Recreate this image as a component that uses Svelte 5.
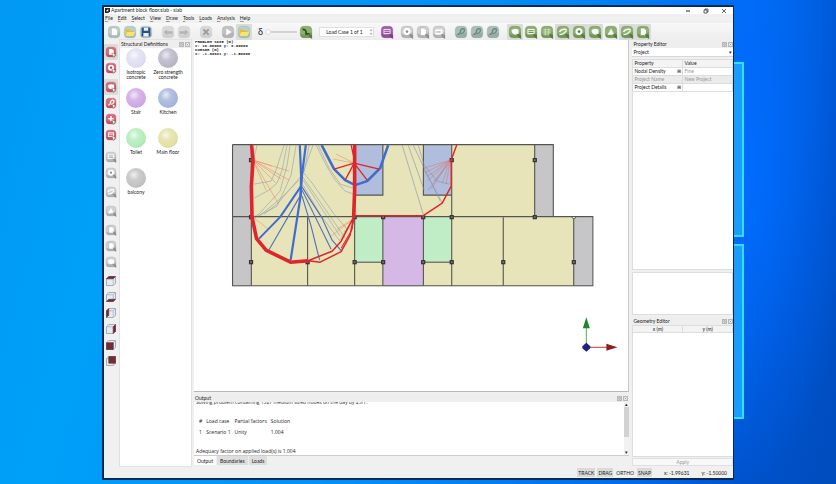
<script>
    let menus = ['File', 'Edit', 'Select', 'View', 'Draw', 'Tools', 'Loads', 'Analysis', 'Help'];

    let fileTools = [
        [
            { name: 'New', tone: 'teal', glyph: 'page' },
            { name: 'Open', tone: 'teal', glyph: 'folder' },
            { name: 'Save', tone: 'teal', glyph: 'disk' },
        ],
        [
            { name: 'Undo', tone: 'dim', glyph: 'undo' },
            { name: 'Redo', tone: 'dim', glyph: 'redo' },
        ],
        [{ name: 'Delete', tone: 'dim', glyph: 'cross' }],
        [
            { name: 'Solve', tone: 'ash', glyph: 'play' },
            { name: 'Unlock', tone: 'teal', glyph: 'folder', on: true },
        ],
    ];

    let viewTools = [
        [
            { name: 'Zoom in', tone: 'grey', glyph: 'dot' },
            { name: 'Zoom out', tone: 'grey', glyph: 'page' },
            { name: 'Zoom all', tone: 'grey', glyph: 'dash' },
        ],
        [
            { name: 'Front', tone: 'slate', glyph: 'wave' },
            { name: 'Side', tone: 'slate', glyph: 'wave' },
            { name: 'Top', tone: 'slate', glyph: 'wave' },
        ],
        [
            { name: 'Solids', tone: 'green', glyph: 'blob', on: true },
            { name: 'Boundaries', tone: 'green', glyph: 'list' },
            { name: 'Grid', tone: 'green', glyph: 'grid' },
            { name: 'Nodes', tone: 'green', glyph: 'slash', on: true },
            { name: 'Vertices', tone: 'green', glyph: 'dot', on: true },
            { name: 'Zones', tone: 'green', glyph: 'blob', on: true },
            { name: 'Supports', tone: 'green', glyph: 'tri' },
            { name: 'Rotation', tone: 'green', glyph: 'slash', on: true },
            { name: 'Slip lines', tone: 'green', glyph: 'page', on: true },
        ],
    ];

    let sideTools = [
        [
            { name: 'Select', tone: 'red', glyph: 'page', on: true },
            { name: 'Select box', tone: 'red', glyph: 'dot' },
        ],
        [
            { name: 'Pointer', tone: 'red', glyph: 'blob', on: true },
            { name: 'Move', tone: 'red', glyph: 'wave' },
            { name: 'Insert vertex', tone: 'red', glyph: 'plus' },
            { name: 'Rotate', tone: 'red', glyph: 'list' },
        ],
        [
            { name: 'Rectangle', tone: 'grey', glyph: 'list' },
            { name: 'Polygon', tone: 'grey', glyph: 'dot' },
        ],
        [{ name: 'Line', tone: 'grey', glyph: 'slash' }],
        [{ name: 'Pan', tone: 'grey', glyph: 'tri' }],
        [
            { name: 'Zoom', tone: 'grey', glyph: 'page' },
            { name: 'Zoom window', tone: 'grey', glyph: 'page' },
            { name: 'Zoom extents', tone: 'grey', glyph: 'blob' },
        ],
        [
            { name: 'View top', face: 'top' },
            { name: 'View bottom', face: 'bottom' },
            { name: 'View left', face: 'left' },
            { name: 'View right', face: 'right' },
            { name: 'View front', face: 'front' },
            { name: 'View back', face: 'back' },
        ],
    ];

    let tones = {
        teal: ['#b9cfca', '#8fa8a4', '#ffffff'],
        dim: ['#d9d9d9', '#c6c6c6', '#b4b4b4'],
        ash: ['#c2c2c2', '#a2a2a2', '#ffffff'],
        grey: ['#d2d2d2', '#8f8f8f', '#ffffff'],
        slate: ['#a9bfb9', '#809892', '#6a8881'],
        purple: ['#a55cae', '#7c3f86', '#ecd9ef'],
        green: ['#8fb071', '#557d3b', '#f8fcf5'],
        red: ['#d76a78', '#a93c4b', '#ffffff'],
    };

    let faces = {
        top: 'M2 5L5 2H14L11 5Z',
        bottom: 'M2 14L5 11H14L11 14Z',
        left: 'M2 5L5 2V11L2 14Z',
        right: 'M11 5L14 2V11L11 14Z',
        front: 'M2 5H11V14H2Z',
        back: 'M5 2H14V11H5Z',
    };

    let materials = [
        { name: 'Isotropic concrete', color: '#e0def2' },
        { name: 'Zero strength concrete', color: '#bbb8c9' },
        { name: 'Stair', color: '#d0a9e6' },
        { name: 'Kitchen', color: '#a6b7dc' },
        { name: 'Toilet', color: '#b3edbb' },
        { name: 'Main floor', color: '#e3e1a6' },
        { name: 'balcony', color: '#c3c3c3' },
    ];

    // x, y, width, height, fill
    let zones = [
        [233, 145, 18, 141, '#c6c6c8'],
        [251, 145, 283, 72, '#e6e4b8'],
        [534, 145, 19, 72, '#c6c6c8'],
        [251, 217, 322, 69, '#e6e4b8'],
        [573, 217, 19, 69, '#c6c6c8'],
        [354, 145, 29, 50, '#b0bddc'],
        [423, 145, 28, 50, '#b0bddc'],
        [354, 217, 29, 45, '#c0edc5'],
        [423, 217, 28, 45, '#c0edc5'],
        [383, 217, 40, 69, '#d5b8e6'],
    ];

    let walls = [
        'M232.5 144.5H553V216.5', 'M232.5 144.5V285.5H592.5V216.5H232.5',
        'M251.3 144.5V285.5', 'M307.5 217V285.5', 'M354.5 144.5V285.5',
        'M382.7 145V195H354.5', 'M451.5 195H423.2V145', 'M451.5 145V285.5',
        'M382.7 217V285.5', 'M423.2 217V285.5', 'M354.5 262H382.7', 'M423.2 262H451.5',
        'M503 217V285.5', 'M534.4 144.5V216.5', 'M573.4 217V285.5',
    ];

    let columns = [
        [251, 160], [251, 217], [251, 262], [307.5, 262], [354.5, 217], [354.5, 262],
        [383, 217], [383, 262], [423, 217], [423, 262], [451.5, 160], [451.5, 217],
        [451.5, 262], [503, 262], [534.5, 160], [534.5, 217], [573.5, 262],
    ];

    let faintBlue = [
        'M284 145L276 170L271 181L254 184', 'M287 145L282 170L277 183L269 190L254 198',
        'M290 145L287 165L280 191L266 206L259 214L253 217', 'M299 180L282 197L258 217',
        'M300 177L278 203L264 214', 'M296 145L291 175L277 206L254 218', 'M257 145L254 158',
        'M313 145L302 175', 'M309 145L304 172', 'M303 172L312 183L334 214L347 229',
        'M302 176L330 216L345 238', 'M303 180L324 212L340 236', 'M303 185L320 214L339 240',
        'M316 145L326 165L335 180L345 191L354 194', 'M318 145L329 168L340 184L353 188',
    ];

    let paleBlue = [
        'M402 145L423 214', 'M408 145L424 190', 'M413 145L426 172L440 201',
        'M418 145L424 165L437 181L449 184', 'M424 170L432 184L442 203', 'M447 165L428 190',
    ];

    let midBlue = [
        'M300.5 195L269 249.5', 'M302 190L331 249', 'M302 187L322 218L332 240L341 250.5',
        'M302 196L311 226L319.5 260',
    ];

    let faintRed = [
        'M253 160L272 166', 'M253 160L289 171', 'M253 160L289 180', 'M253 160L281 179',
        'M253 160L276 183', 'M253 160L266 190', 'M253 160L278 203',
        'M253 217L268 229', 'M353 219L337 229', 'M353 219L331 236',
        'M353 219L339 241', 'M353 219L344 232', 'M354 163L333 159', 'M354 163L336 154',
        'M450 160L424 168', 'M450 160L426 172', 'M450 160L428 176', 'M450 160L427 181',
        'M450 160L434 181', 'M450 160L442 183', 'M450 160L446 184', 'M450 160L431 189',
    ];

    let properties = [
        { label: 'Nodal Density', mark: true, value: 'Fine' },
        { label: 'Project Name', value: 'New Project', off: true },
        { label: 'Project Details', mark: true, value: '' },
    ];

    let modes = [
        { name: 'TRACK', on: true },
        { name: 'DRAG', on: true },
        { name: 'ORTHO' },
        { name: 'SNAP', on: true },
    ];

    let outputTab = $state('Output');
    let scale = $state(0);
    let project = $state('Project');
</script>

{#snippet toolButton(tool)}
    <button class="tool" class:on={tool.on} aria-label={tool.name}>
        {#if tool.face}
            <svg viewBox="0 0 16 16">
                <path d="M2 5L5 2H14V11L11 14H2Z" fill="#e6ebf2" stroke="#8d97a5" />
                <path d="M2 5H11V14M11 5L14 2" fill="none" stroke="#a5afbd" />
                <path d={faces[tool.face]} fill="#7a2a35" stroke="#54323b" stroke-width="0.8" />
            </svg>
        {:else}
            {@const [light, dark, ink] = tones[tool.tone]}
            <svg viewBox="0 0 16 16">
                <rect x="1.5" y="1.5" width="13" height="13" rx="4" fill={light} stroke={dark} stroke-opacity="0.4" />
                <path d="M2 10Q8 13 14.5 8V11.5Q14.5 14.5 11.5 14.5H5Q2 14.5 2 11.5Z" fill={dark} opacity="0.45" />
                {#if tool.glyph === 'page'}
                    <path d="M5 3.5H9.5L12 6V12H5Z" fill={ink} stroke={dark} stroke-width="0.5" />
                {:else if tool.glyph === 'folder'}
                    <path d="M3 5H7L8 6.5H12V12H3Z" fill="#e4bd35" />
                    <path d="M4.5 8H14L12 12.5H3Z" fill="#f9e46b" />
                {:else if tool.glyph === 'disk'}
                    <path d="M3 3H13V13H3Z" fill="#284f86" />
                    <path d="M5.5 3H10.5V6.5H5.5ZM5 9H11V13H5Z" fill="#e7eff9" />
                {:else if tool.glyph === 'undo'}
                    <path d="M3 8L7 5V7H13V10H7V12Z" fill={ink} />
                {:else if tool.glyph === 'redo'}
                    <path d="M13 8L9 5V7H3V10H9V12Z" fill={ink} />
                {:else if tool.glyph === 'cross'}
                    <path d="M5 5L11 11M11 5L5 11" stroke="#999" stroke-width="2" />
                {:else if tool.glyph === 'play'}
                    <path d="M6 4L12 8L6 12Z" fill={ink} />
                {:else if tool.glyph === 'list'}
                    <path d="M4 4.5H12V10.5H4Z" fill={ink} />
                    <path d="M5 6.5H11M5 8.5H11" stroke={dark} />
                {:else if tool.glyph === 'dot'}
                    <circle cx="8" cy="7.5" r="4" fill={ink} />
                    <circle cx="8" cy="7.5" r="1.5" fill={dark} />
                {:else if tool.glyph === 'dash'}
                    <path d="M4 5H12V11H4Z" fill={ink} />
                    <path d="M5 8H10" stroke={dark} />
                {:else if tool.glyph === 'wave'}
                    <path d="M4 11Q8 10 7.5 6Q10 3 12 5Q12 9 8 10" fill="none" stroke={ink} stroke-width="1.6" />
                {:else if tool.glyph === 'blob'}
                    <path d="M4 6Q7 3 12 5V10L8 11Q4 10 4 6Z" fill={ink} />
                {:else if tool.glyph === 'grid'}
                    <path d="M4 5.5H12M4 8H12M4 10.5H12M6 4V12M10 4V12" stroke={ink} stroke-width="0.6" />
                {:else if tool.glyph === 'slash'}
                    <path d="M4 8Q6 4 12 5M4 11Q9 11 12 6" fill="none" stroke={ink} stroke-width="1.6" />
                {:else if tool.glyph === 'tri'}
                    <path d="M8 4L12 11H4Z" fill={ink} />
                {:else if tool.glyph === 'plus'}
                    <path d="M8 4V11M4.5 7.5H11.5" stroke={ink} stroke-width="2" />
                {:else if tool.glyph === 'curve'}
                    <path d="M4 5Q9 5 8 10H12" fill="none" stroke="#2f4f22" stroke-width="2" />
                {/if}
                {#if tool.tone === 'red'}
                    <path d="M9 9L15 12L12.5 13L11.5 15.5Z" fill="#fff8dc" stroke="#7c6a55" stroke-width="0.6" />
                {:else if tool.tone === 'green' || tool.tone === 'purple' || tool.tone === 'grey'}
                    <path d="M10 10L15 11.5V16L12 14Z" fill={dark} />
                {/if}
            </svg>
        {/if}
    </button>
{/snippet}

{#snippet dockTitle(title)}
    <header class="dock-title">
        <h2>{title}</h2>
        <button class="dock-icon" aria-label="Float {title}">
            <svg viewBox="0 0 6 6"><path d="M.5 .5H5.5V5.5H.5ZM2 3.5V2H4V4H2" fill="none" stroke="#888" stroke-width=".7" /></svg>
        </button>
        <button class="dock-icon" aria-label="Close {title}">
            <svg viewBox="0 0 6 6"><path d="M.5 .5H5.5V5.5H.5ZM2 2L4 4M4 2L2 4" fill="none" stroke="#888" stroke-width=".7" /></svg>
        </button>
    </header>
{/snippet}

<div class="desktop">
    <div class="window">
        <div class="glow" aria-hidden="true"><i></i><i></i></div>
        <div class="frame">
            <div class="titlebar">
                <svg class="logo" viewBox="0 0 6 6"><path d="M0 0H6V4L4 6H0Z" fill="#222" /><path d="M1 4L4 1V4Z" fill="#fff" /></svg>
                <h1>Apartment block floor.slab - slab</h1>
                <button aria-label="Minimise"><svg viewBox="0 0 6 6"><path d="M1 3H5" stroke="#222" /></svg></button>
                <button aria-label="Restore"><svg viewBox="0 0 6 6"><path d="M1 2H4V5H1ZM2 2V1H5V4H4" fill="none" stroke="#222" stroke-width=".7" /></svg></button>
                <button aria-label="Close"><svg viewBox="0 0 6 6"><path d="M1 1L5 5M5 1L1 5" stroke="#222" stroke-width=".7" /></svg></button>
            </div>

            <nav class="menubar">
                {#each menus as menu}
                    <button><u>{menu[0]}</u>{menu.slice(1)}</button>
                {/each}
            </nav>

            <div class="toolbar">
                {#each fileTools as group}
                    <div class="group">
                        {#each group as tool}{@render toolButton(tool)}{/each}
                    </div>
                {/each}
                <div class="group">
                    <label class="slider">
                        <span>δ</span>
                        <input type="range" min="0" max="10" bind:value={scale} />
                    </label>
                    {@render toolButton({ name: 'Animate', tone: 'green', glyph: 'curve' })}
                </div>
                <div class="spinner">
                    <input aria-label="Load case" value="Load Case 1 of 1" />
                    <svg viewBox="0 0 4 8"><path d="M1 3L2 1.5L3 3M1 5L2 6.5L3 5" fill="none" stroke="#888" stroke-width=".7" /></svg>
                </div>
                <div class="group near">{@render toolButton({ name: 'Load cases', tone: 'purple', glyph: 'list' })}</div>
                {#each viewTools as group}
                    <div class="group">
                        {#each group as tool}{@render toolButton(tool)}{/each}
                    </div>
                {/each}
            </div>

            <div class="workspace">
                <div class="sidebar">
                    {#each sideTools as group}
                        <div class="side-group">
                            {#each group as tool}{@render toolButton(tool)}{/each}
                        </div>
                    {/each}
                </div>

                <section class="definitions">
                    {@render dockTitle('Structural Definitions')}
                    <div class="materials">
                        {#each materials as material}
                            <button class="material">
                                <span class="ball" style="background-color: {material.color}"></span>
                                {material.name}
                            </button>
                        {/each}
                    </div>
                </section>

                <main>
                    <div class="canvas">
                        <pre class="readout">PROBLEM SIZE (m)
x: 19.00000 y: 9.00000
CURSOR (m)
x: -1.99631 y: -1.50000</pre>
                        <svg class="plan" viewBox="194 40 434 351">
                            {#each zones as [x, y, width, height, fill]}
                                <rect {x} {y} {width} {height} {fill} />
                            {/each}
                            <g fill="none" stroke="#55554f" stroke-width="1.1">
                                {#each walls as d}<path {d} />{/each}
                            </g>
                            <g fill="#77776c" stroke="#333" stroke-width="1.2">
                                {#each columns as [x, y]}
                                    <rect x={x - 1.5} y={y - 1.5} width="3" height="3" />
                                {/each}
                            </g>
                            <path d="M571.5 216.5A2 2 0 0 0 575.5 216.5Z" fill="#fff" stroke="#444" stroke-width=".8" />

                            <g fill="none" stroke-linejoin="round">
                                <g stroke="#7285ad" stroke-width=".6" opacity=".7">
                                    {#each faintBlue as d}<path {d} />{/each}
                                </g>
                                <g stroke="#7f8eb5" stroke-width=".8" opacity=".7">
                                    {#each paleBlue as d}<path {d} />{/each}
                                </g>
                                <g stroke="#e0604e" stroke-width=".6" opacity=".6">
                                    {#each faintRed as d}<path {d} />{/each}
                                </g>
                                <g stroke="#4f70bd" stroke-width="1.1">
                                    {#each midBlue as d}<path {d} />{/each}
                                </g>
                                <g stroke="#426bd0">
                                    <path d="M299.7 145L301 175L300.5 196" stroke-width="2.2" />
                                    <path d="M305.7 145L302 174L300.5 196L290.5 260" stroke-width="2.2" />
                                    <path d="M301 186L280 217L259 238.5" stroke-width="2" />
                                    <path d="M321.5 145L334 169L345 180L355 185L367 181L380 168L388 145" stroke-width="2.6" />
                                </g>
                                <g stroke="#e0242c">
                                    <path d="M354 163L334 169M354 163L345 180M354 163L367 180M354 163L379 169M351 145L355 163" stroke-width="1.3" />
                                    <path d="M251.5 145L253 160L251.3 186L252 217L256.5 238.5L266 250L290.5 262L308 260.5" stroke-width="3.6" />
                                    <path d="M354.5 145V190L353.5 217" stroke-width="3.6" />
                                    <path d="M308 260.5L332 251L341 241L353.5 217M308 260.5L320 262L341 251.5L350 235L353.5 217" stroke-width="1.5" />
                                    <path d="M341 248L352 229L354 217" stroke-width="1" />
                                    <path d="M354 215.5H423L442 203L451 186V160L456.5 145" stroke-width="1.4" />
                                </g>
                            </g>

                            <path d="M586 347V326" stroke="#4fb052" />
                            <path d="M586 347H607" stroke="#b04040" />
                            <path d="M582.5 328L586 317L589.5 328Z" fill="#188a2a" />
                            <path d="M606 343.5L617 347L606 350.5Z" fill="#8e1c20" />
                            <path d="M582 346L586 342.5L590 346V348L586 351.5L582 348Z" fill="#20207e" />
                        </svg>
                    </div>

                    <section class="output">
                        {@render dockTitle('Output')}
                        <div class="log">
                            <div class="log-text">
                                <p class="cut">Solving problem containing 1327 medium sized nodes on the day by 25/7.</p>
                                <table>
                                    <thead>
                                        <tr><th>#</th><th>Load case</th><th>Partial factors</th><th>Solution</th></tr>
                                    </thead>
                                    <tbody>
                                        <tr><td>1</td><td>Scenario 1</td><td>Unity</td><td>1.004</td></tr>
                                    </tbody>
                                </table>
                                <p>Adequacy factor on applied load(s) is 1.004</p>
                            </div>
                            <div class="scrollbar"><span>▴</span><i></i><span>▾</span></div>
                        </div>
                        <div class="tabs" role="tablist">
                            {#each ['Output', 'Boundaries', 'Loads'] as tab}
                                <button role="tab" aria-selected={outputTab === tab} onclick={() => (outputTab = tab)}>{tab}</button>
                            {/each}
                        </div>
                    </section>
                </main>

                <aside>
                    <section class="property-editor">
                        {@render dockTitle('Property Editor')}
                        <div class="picker">
                            <select aria-label="Object" bind:value={project}>
                                <option>Project</option>
                            </select>
                            <span>▾</span>
                        </div>
                        <div class="sheet">
                            <table>
                                <thead><tr><th>Property</th><th>Value</th></tr></thead>
                                <tbody>
                                    {#each properties as row}
                                        <tr class:off={row.off}>
                                            <td><div class="name">{row.label}{#if row.mark}<b>⊞</b>{/if}</div></td>
                                            <td class="value">{row.value}</td>
                                        </tr>
                                    {/each}
                                </tbody>
                            </table>
                        </div>
                    </section>
                    <div class="help"></div>
                    <section class="geometry-editor">
                        {@render dockTitle('Geometry Editor')}
                        <div class="sheet">
                            <table class="coords">
                                <thead><tr><th>x (m)</th><th>y (m)</th></tr></thead>
                            </table>
                        </div>
                        <button class="apply">Apply</button>
                    </section>
                </aside>
            </div>

            <footer>
                {#each modes as mode}
                    <button class:on={mode.on}>{mode.name}</button>
                {/each}
                <span>x: -1.99631</span>
                <span>y: -1.50000</span>
            </footer>
        </div>
    </div>
</div>

<style>
    :global(body) {
        margin: 0;
    }
    .desktop {
        box-sizing: border-box;
        min-height: 100vh;
        padding: 5px 102px 4px;
        display: flex;
        background:
            radial-gradient(ellipse 110px 320px at 89% 35%, #006cff 0%, transparent 100%),
            linear-gradient(105deg, #0098f2 0%, #00a0f8 16%, #0090f8 50%, #006cf0 78%, #0052cc 90%, #004cbc 100%);
        color: #222;
        font-family: Lato, "Liberation Sans", sans-serif;
        font-size: 5px;
        line-height: 8px;
    }
    button, input, select {
        font: inherit;
        color: inherit;
        padding: 0;
        margin: 0;
        border: none;
        background: none;
    }
    h1, h2, p, pre {
        margin: 0;
        font-size: 5px;
        font-weight: normal;
    }
    svg {
        display: block;
    }
    .window {
        position: relative;
        display: flex;
        flex: 1;
        min-width: 0;
    }
    .frame {
        position: relative;
        display: flex;
        flex-direction: column;
        flex: 1;
        min-width: 0;
        border: 2px solid #062a52;
        border-right-width: 1px;
        background: #f0f0f0;
    }

    /* Lit window panes behind the application */
    .glow {
        position: absolute;
        top: 12%;
        bottom: 13%;
        right: -10px;
        width: 20px;
        display: flex;
        flex-direction: column;
        gap: 7px;
    }
    .glow i {
        flex: 1;
        background: #1b9cff;
        border: 2px solid #2fe2ff;
    }

    .titlebar {
        display: flex;
        align-items: center;
        height: 7px;
        background: #fff;
    }
    .titlebar h1 {
        flex: 1;
        line-height: 7px;
    }
    .titlebar button {
        width: 18px;
    }
    .titlebar button svg {
        width: 6px;
        margin: auto;
    }
    .logo {
        width: 5px;
        margin: 0 1px;
    }

    .menubar {
        display: flex;
        gap: 5px;
        padding: 0 1px;
        height: 9px;
        line-height: 9px;
    }
    .menubar u {
        text-decoration-thickness: 1px;
        text-decoration-color: #999;
    }

    .toolbar {
        display: flex;
        align-items: center;
        gap: 6px;
        height: 17px;
        padding: 0 2px;
        background: linear-gradient(#f8f8f8, #ededed);
    }
    .group {
        display: flex;
    }
    .group.near {
        margin-right: -2px;
    }
    .tool {
        width: 16px;
        height: 16px;
        padding: 1px;
        border-radius: 1px;
    }
    .tool svg {
        width: 14px;
        height: 14px;
    }
    .tool.on {
        background: #d9dcd9;
    }
    .slider {
        display: flex;
        align-items: center;
        gap: 2px;
        margin-right: 1px;
        font-size: 9px;
    }
    .slider input {
        appearance: none;
        width: 32px;
        height: 2px;
        background: #d2d2d2;
    }
    .slider input::-webkit-slider-thumb {
        appearance: none;
        width: 6px;
        height: 6px;
        border-radius: 3px;
        background: #fff;
        border: 1px solid #ddd;
    }
    .spinner {
        display: flex;
        align-items: center;
        width: 53px;
        height: 8px;
        background: #fff;
        outline: 1px solid #e0e0e0;
    }
    .spinner input {
        flex: 1;
        min-width: 0;
        text-align: center;
        height: 8px;
    }
    .spinner svg {
        width: 4px;
        height: 8px;
    }

    .workspace {
        display: flex;
        flex: 1;
        min-height: 0;
    }
    .sidebar {
        display: flex;
        flex-direction: column;
        gap: 3px;
        width: 16px;
        padding-top: 4px;
    }
    .side-group {
        display: flex;
        flex-direction: column;
    }
    .side-group:nth-child(3) {
        margin-top: 3px;
    }
    .sidebar .tool {
        width: 14px;
        padding: 1px;
    }
    .sidebar .tool svg {
        width: 12px;
    }

    .dock-title {
        display: flex;
        align-items: center;
        height: 8px;
        padding: 0 1px;
        background: #eee;
    }
    .dock-title h2 {
        flex: 1;
        white-space: nowrap;
    }
    .dock-icon, .dock-icon svg {
        width: 5px;
        height: 5px;
    }
    .dock-icon {
        margin-left: 1px;
    }

    .definitions {
        display: flex;
        flex-direction: column;
        width: 71px;
        margin: 0 3px 1px 0;
        background: #fff;
        outline: 1px solid #e2e2e2;
    }
    .materials {
        display: grid;
        grid-template-columns: 32px 32px;
        grid-auto-rows: 40px;
    }
    .material {
        display: flex;
        flex-direction: column;
        align-items: center;
        line-height: 5px;
    }
    .ball {
        width: 20px;
        height: 20px;
        margin-bottom: 2px;
        border-radius: 50%;
        background-image: radial-gradient(circle at 40% 35%, rgba(255, 255, 255, .75) 0%, rgba(255, 255, 255, .15) 30%, transparent 60%, rgba(90, 90, 110, .15) 100%);
    }

    main {
        display: flex;
        flex-direction: column;
        flex: 1;
        min-width: 0;
    }
    .canvas {
        position: relative;
        flex: 1;
        min-height: 0;
        background: #fff;
        border-bottom: 1px solid #b8b8b8;
        border-right: 1px solid #c8c8c8;
    }
    .readout {
        position: absolute;
        top: 0;
        left: 1px;
        font: bold 4px/4px "Liberation Mono", monospace;
    }
    .plan {
        width: 100%;
        height: 100%;
    }
    .output {
        padding-top: 2px;
    }
    .log {
        display: flex;
        height: 53px;
        background: #fff;
        border-bottom: 1px solid #ccc;
        font-family: "Open Sans", sans-serif;
    }
    .log-text {
        flex: 1;
        padding: 0 2px;
        overflow: hidden;
    }
    .cut {
        margin-top: -4px;
    }
    table {
        border-collapse: collapse;
    }
    th, td {
        padding: 0;
        font-weight: normal;
        text-align: left;
    }
    .log table {
        margin: 9px 3px 10px;
    }
    .log th, .log td {
        height: 11px;
        padding-right: 4px;
    }
    .scrollbar {
        display: flex;
        flex-direction: column;
        width: 5px;
        background: #f2f2f2;
        text-align: center;
        line-height: 5px;
    }
    .scrollbar i {
        height: 30px;
        margin-bottom: auto;
        background: #d2d2d2;
    }
    .tabs {
        display: flex;
        height: 11px;
        gap: 1px;
    }
    .tabs button {
        height: 9px;
        padding: 0 3px;
        background: #dedede;
    }
    .tabs button[aria-selected="true"] {
        background: #fff;
    }

    aside {
        display: flex;
        flex-direction: column;
        width: 16%;
        margin-left: 3px;
    }
    aside .dock-title {
        padding-right: 0;
    }
    .property-editor {
        display: flex;
        flex-direction: column;
        flex: 235;
    }
    .picker {
        display: flex;
        height: 8px;
        margin-bottom: 2px;
        padding: 0 1px;
        background: #fff;
        border-bottom: 1px solid #d8d8d8;
    }
    .picker select {
        appearance: none;
        flex: 1;
    }
    .sheet {
        flex: 1;
        background: #fff;
        border: 1px solid #ddd;
        border-right: none;
    }
    .sheet table {
        width: 100%;
        table-layout: fixed;
    }
    .sheet th {
        height: 7px;
        line-height: 7px;
        background: #f3f3f3;
    }
    .sheet th, .sheet td {
        padding: 0 1px;
        border-bottom: 1px solid #ddd;
        border-right: 1px solid #ddd;
    }
    .sheet td {
        height: 7px;
        line-height: 7px;
    }
    .sheet .coords th {
        text-align: center;
        height: 6px;
        line-height: 6px;
    }
    .name {
        display: flex;
        justify-content: space-between;
    }
    .name b {
        font-weight: normal;
    }
    .value {
        color: #999;
    }
    .off {
        background: #ebebeb;
        color: #999;
    }
    .help {
        flex: 42;
        margin: 2px 0;
        background: #fff;
        border: 1px solid #ddd;
    }
    .geometry-editor {
        display: flex;
        flex-direction: column;
        flex: 153;
    }
    .apply {
        height: 8px;
        margin: 1px 0;
        background: #f8f8f8;
        border: 1px solid #e0e0e0;
        color: #999;
        line-height: 6px;
    }

    footer {
        display: flex;
        align-items: center;
        justify-content: flex-end;
        gap: 2px;
        height: 11px;
        padding-right: 6px;
    }
    footer button {
        height: 9px;
        padding: 0 1px;
    }
    footer button.on {
        background: #dadada;
    }
    footer span {
        margin-left: 10px;
    }
</style>
